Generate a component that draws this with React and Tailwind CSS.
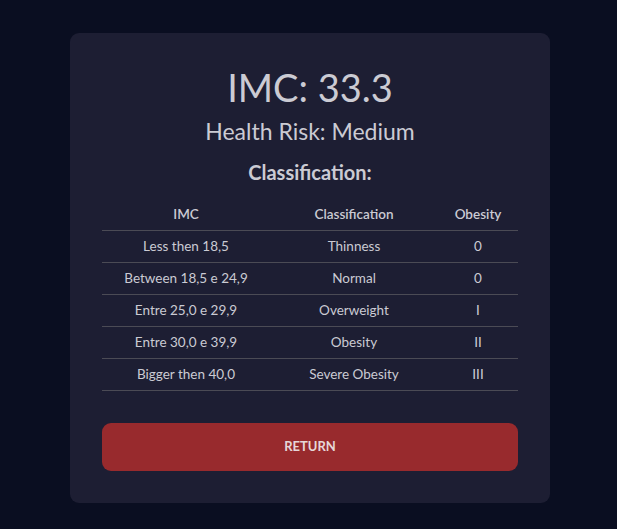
import React from "react";

const rows = [
  ["Less then 18,5", "Thinness", "0"],
  ["Between 18,5 e 24,9", "Normal", "0"],
  ["Entre 25,0 e 29,9", "Overweight", "I"],
  ["Entre 30,0 e 39,9", "Obesity", "II"],
  ["Bigger then 40,0", "Severe Obesity", "III"],
];

export default function App() {
  return (
    <div
      className="min-h-[529px] w-full bg-[#0a0e21] flex justify-center pt-[33px] pl-[3px]"
      style={{ fontFamily: "Lato, 'Noto Sans', sans-serif" }}
    >
      <div className="w-[480px] h-[470px] bg-[#1d1e33] rounded-[9px] px-[32px] flex flex-col items-center text-[#cbcbd3]">
        <h1 className="mt-[30px] text-[38px] leading-[48px]">IMC: 33.3</h1>
        <h2 className="mt-[6px] text-[23px] leading-[28px]">Health Risk: Medium</h2>
        <h3 className="mt-[15px] text-[20px] leading-[24px] font-bold">Classification:</h3>
        <table className="mt-[14px] w-[416px] border-collapse text-[13.5px] table-fixed">
          <thead>
            <tr className="h-[32px] border-b border-[#4b4b55]">
              <th className="w-[168px] font-semibold">IMC</th>
              <th className="w-[168px] font-semibold">Classification</th>
              <th className="w-[80px] font-semibold">Obesity</th>
            </tr>
          </thead>
          <tbody>
            {rows.map((r) => (
              <tr key={r[0]} className="h-[32px] border-b border-[#4b4b55]">
                <td className="text-center">{r[0]}</td>
                <td className="text-center">{r[1]}</td>
                <td className="text-center">{r[2]}</td>
              </tr>
            ))}
          </tbody>
        </table>
        <button className="mt-[32px] w-[416px] h-[48px] rounded-[9px] bg-[#982a2d] text-[#e6d6d8] text-[13px] font-bold">
          RETURN
        </button>
      </div>
    </div>
  );
}
